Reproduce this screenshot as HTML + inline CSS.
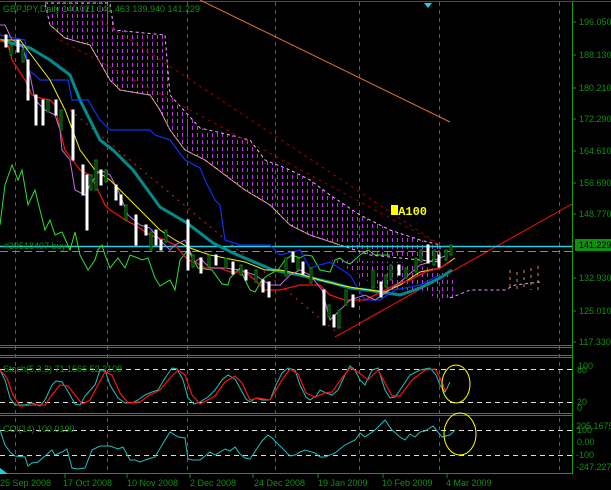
<!DOCTYPE html>
<html><head><meta charset="utf-8"><style>
html,body{margin:0;padding:0;background:#000;}
svg{display:block;font-family:"Liberation Sans",sans-serif;}
</style></head><body>
<svg width="611" height="490" viewBox="0 0 611 490" xmlns="http://www.w3.org/2000/svg">
<defs>
<pattern id="cl" x="0" y="0" width="5" height="7" patternUnits="userSpaceOnUse">
<rect x="2" y="0" width="1" height="4" fill="#c030e8"/>
</pattern>
</defs>
<rect width="611" height="490" fill="#000"/>
<line x1="0" y1="1.5" x2="611" y2="1.5" stroke="#0a7a0a" stroke-width="1"/>
<g stroke="#0f8f0f" stroke-dasharray="4,4" stroke-width="1">
<line x1="15.5" y1="2" x2="15.5" y2="473"/>
<line x1="107.5" y1="2" x2="107.5" y2="473"/>
<line x1="187.5" y1="2" x2="187.5" y2="473"/>
<line x1="275.5" y1="2" x2="275.5" y2="473"/>
<line x1="359.5" y1="2" x2="359.5" y2="473"/>
<line x1="439.5" y1="2" x2="439.5" y2="473"/>
<line x1="559.5" y1="2" x2="559.5" y2="473"/>
</g>
<polygon points="45,3 110,3 114,30 165,35 170,95 200,128 230,135 250,140 265,160 290,170 310,180 330,195 360,215 390,230 420,240 440,245 440,262 400,258 370,255 340,245 310,235 290,225 270,205 245,190 225,175 205,160 185,150 170,130 160,110 150,95 120,90 110,80 90,45 65,38 50,25" fill="url(#cl)" stroke="#f0b0ff" stroke-width="1" stroke-dasharray="3,3"/>
<polyline points="50,25 65,38 90,45 110,80 120,90 150,95 160,110 170,130 185,150 205,160 225,175 245,190 270,205 290,225 310,235 340,245" fill="none" stroke="#f0a050" stroke-dasharray="3,3"/>
<polygon points="330,260 360,275 380,290 420,290 440,300 455,300 455,280 440,270 400,262" fill="url(#cl)"/>
<polyline points="450,298 470,290 505,290 515,285 540,282" fill="none" stroke="#e0a0ff" stroke-dasharray="3,3"/>
<g stroke="#e08a40" stroke-dasharray="3,4">
<line x1="510" y1="270" x2="510" y2="290"/><line x1="517" y1="272" x2="517" y2="290"/><line x1="524" y1="270" x2="524" y2="290"/><line x1="531" y1="268" x2="531" y2="290"/><line x1="538" y1="266" x2="538" y2="290"/>
</g>
<line x1="200" y1="0" x2="450" y2="122" stroke="#e07030" stroke-width="1"/>
<line x1="60" y1="40" x2="440" y2="245" stroke="#a00000" stroke-dasharray="3,4"/>
<line x1="100" y1="20" x2="440" y2="245" stroke="#a00000" stroke-dasharray="3,4"/>
<line x1="70" y1="110" x2="340" y2="335" stroke="#c03020" stroke-dasharray="2,5"/>
<line x1="335" y1="337" x2="572" y2="204" stroke="#ff1010" stroke-width="1"/>
<line x1="0" y1="246.5" x2="572" y2="246.5" stroke="#20d0e0" stroke-width="1.5"/>
<line x1="0" y1="251.5" x2="572" y2="251.5" stroke="#30c030" stroke-dasharray="8,4"/>
<text x="4" y="249" font-size="9" fill="#109010">#39518407 buy</text>
<polyline points="0,225 5,185 12,165 18,180 22,170 28,205 35,190 40,210 45,230 50,220 55,235 62,232 70,250 75,232 80,255 88,270 95,260 98,250 102,245 105,255 110,268 118,258 125,268 130,255 138,258 142,260 148,258 155,278 160,286 170,280 175,290 180,260 188,250 198,268 212,270 222,284 228,285 230,278 240,268 245,280 250,290 255,292 262,280 268,275 278,270 285,260 292,255 300,258 305,255 312,256 320,270 330,272 335,260 340,258 345,262 350,264 360,255 368,250 375,255 380,255 390,255" fill="none" stroke="#30e030" stroke-width="1"/>
<polyline points="0,40 30,48 50,60 70,75 80,100 100,140 113,150 133,170 160,207 187,223 213,243 233,253 273,270 300,275 333,283 350,288 367,290 400,295 420,288 440,278 452,270" fill="none" stroke="#008c8c" stroke-width="3"/>
<polyline points="0,35 25,40 28,70 35,75 40,80 68,80 72,100 88,100 100,120 110,130 150,130 155,135 170,140 185,160 200,168 205,180 215,200 220,205 225,240 240,245 270,245 280,255 300,250 310,268 330,262 350,275 365,300 380,300 395,290 420,285 440,275" fill="none" stroke="#1030f0" stroke-width="1.2"/>
<polyline points="0,40 20,40 35,60 50,80 65,110 80,150 95,170 110,180 120,190 130,200 145,215 160,230 175,240 190,248 210,255 225,258 245,262 265,270 280,270 300,274 320,280 340,285 355,288 370,290 385,292 400,285 420,272 440,268 455,258" fill="none" stroke="#f0f010" stroke-width="1"/>
<polyline points="0,40 8,45 12,60 25,80 32,95 40,98 50,100 55,105 60,130 65,150 80,170 90,175 98,190 105,205 110,210 118,215 125,220 135,225 150,235 165,240 175,245 188,260 195,262 205,268 220,268 230,272 245,272 255,280 265,290 280,290 300,285 310,285 320,285 330,295 345,300 365,300 375,295 395,285 410,280 425,272 440,268 450,262" fill="none" stroke="#f01010" stroke-width="1.3"/>
<polyline points="0,25 5,25 12,40 22,45 28,65 35,100 45,110 55,115 60,130 62,150 70,160 75,190 85,195 90,185 100,170 110,175 118,190 128,215 140,225 150,228 160,240 170,250 175,245 185,240 195,262 200,258 210,268 225,268 240,270 255,275 270,285 280,285 290,275 300,270 310,275 322,290 330,320 340,310 350,300 365,295 375,300 390,290 405,278 420,265 430,262 445,256" fill="none" stroke="#c070e0" stroke-width="1"/>
<g fill="#fff" stroke="#fff" stroke-width="1">
<rect x="5" y="35" width="2" height="12"/><rect x="17" y="40" width="2" height="12"/><rect x="27" y="60" width="2" height="40"/><rect x="35" y="95" width="2" height="30"/><rect x="42" y="100" width="2" height="25"/><rect x="55" y="100" width="2" height="15"/>
<rect x="72" y="110" width="2" height="50"/><rect x="82" y="165" width="2" height="30"/><rect x="86" y="175" width="2" height="55"/><rect x="100" y="170" width="2" height="15"/><rect x="115" y="185" width="2" height="15"/><rect x="120" y="195" width="2" height="10"/><rect x="135" y="215" width="2" height="30"/><rect x="145" y="225" width="2" height="10"/><rect x="155" y="230" width="2" height="15"/><rect x="160" y="240" width="2" height="10"/>
<rect x="187" y="220" width="2" height="50"/><rect x="200" y="258" width="2" height="15"/><rect x="215" y="255" width="2" height="10"/><rect x="232" y="262" width="2" height="12"/><rect x="245" y="270" width="2" height="10"/><rect x="262" y="280" width="2" height="12"/><rect x="268" y="282" width="2" height="15"/>
<rect x="292" y="252" width="2" height="10"/><rect x="302" y="262" width="2" height="12"/><rect x="323" y="290" width="2" height="35"/><rect x="333" y="315" width="2" height="12"/><rect x="352" y="295" width="2" height="12"/><rect x="380" y="282" width="2" height="15"/><rect x="398" y="265" width="2" height="10"/><rect x="427" y="245" width="2" height="18"/><rect x="438" y="255" width="2" height="12"/>
</g>
<g fill="#000" stroke="#109010" stroke-width="1">
<rect x="10" y="45" width="2" height="10"/><rect x="22" y="50" width="2" height="12"/><rect x="47" y="100" width="2" height="12"/><rect x="60" y="110" width="2" height="20"/><rect x="90" y="175" width="2" height="15"/><rect x="95" y="160" width="2" height="30"/><rect x="105" y="170" width="2" height="12"/><rect x="125" y="205" width="2" height="15"/><rect x="150" y="232" width="2" height="18"/><rect x="165" y="230" width="2" height="12"/>
<rect x="192" y="255" width="2" height="12"/><rect x="208" y="255" width="2" height="12"/><rect x="225" y="258" width="2" height="10"/><rect x="240" y="265" width="2" height="10"/><rect x="255" y="270" width="2" height="12"/><rect x="285" y="258" width="2" height="18"/><rect x="297" y="258" width="2" height="12"/><rect x="310" y="268" width="2" height="15"/><rect x="328" y="305" width="2" height="12"/><rect x="338" y="310" width="2" height="18"/><rect x="345" y="290" width="2" height="15"/>
<rect x="372" y="270" width="2" height="18"/><rect x="385" y="275" width="2" height="12"/><rect x="390" y="265" width="2" height="15"/><rect x="405" y="268" width="2" height="10"/><rect x="415" y="258" width="2" height="14"/><rect x="420" y="250" width="2" height="12"/><rect x="433" y="250" width="2" height="15"/><rect x="445" y="250" width="2" height="10"/><rect x="450" y="245" width="2" height="10"/>
</g>
<text x="391" y="215" font-size="12" font-weight="bold" fill="#ffff00" font-family="Liberation Mono,monospace">MA100</text>
<rect x="391" y="205" width="7" height="10" fill="#ffff00"/>
<text x="3" y="12" font-size="9" fill="#109010">GBPJPY,Daily  140.021 141.463 139.940 141.229</text>
<polygon points="424,3 432,3 428,8" fill="#20d0e0"/>
<g stroke="#0fa00f" stroke-width="1">
<line x1="0" y1="345.5" x2="572" y2="345.5"/><line x1="0" y1="347.5" x2="572" y2="347.5"/>
<line x1="0" y1="355.5" x2="572" y2="355.5"/><line x1="0" y1="357.5" x2="572" y2="357.5"/>
<line x1="0" y1="413.5" x2="572" y2="413.5"/><line x1="0" y1="415.5" x2="572" y2="415.5"/>
<line x1="0" y1="473.5" x2="572" y2="473.5"/>
<line x1="572.5" y1="2" x2="572.5" y2="474"/>
</g>
<g stroke="#ddd" stroke-dasharray="5,4"><line x1="0" y1="369.5" x2="572" y2="369.5"/><line x1="0" y1="402.5" x2="572" y2="402.5"/><line x1="0" y1="430.5" x2="572" y2="430.5"/><line x1="0" y1="455.5" x2="572" y2="455.5"/></g>
<text x="3" y="372" font-size="9" fill="#109010">Stoch(5,3,3) 71.1666 52.2109</text>
<polyline points="0,370 5,380 10,398 15,405 25,405 32,403 40,406 45,400 52,385 56,381 62,382 66,388 70,395 75,404 80,405 85,396 95,385 100,370 105,370 110,385 118,398 125,403 132,403 138,400 145,395 152,392 158,390 165,378 172,368 177,369 183,380 188,398 194,404 200,402 208,397 215,390 222,380 228,375 235,379 240,388 246,399 250,402 256,398 262,400 270,400 276,385 282,373 288,368 295,370 300,385 306,397 310,400 316,396 320,390 326,393 332,395 338,390 345,375 350,366 355,370 360,380 365,385 372,370 378,368 385,390 390,398 395,397 400,390 410,375 420,370 430,368 436,375 440,385 445,392 450,382" fill="none" stroke="#20c0c0" stroke-width="1"/>
<polyline points="0,370 7,378 13,395 20,406 35,405 45,405 52,395 60,385 68,386 75,395 82,404 90,400 98,385 105,372 112,375 120,393 128,403 140,402 148,396 160,390 170,378 178,370 185,375 192,395 200,404 215,396 225,382 235,376 242,383 250,400 258,398 270,400 282,380 290,369 298,374 306,393 315,397 325,393 332,392 342,378 350,368 358,372 368,380 378,370 385,383 392,396 400,396 412,380 425,370 435,369 440,378 445,390 448,388" fill="none" stroke="#ff1010" stroke-width="1.2"/>
<ellipse cx="456" cy="384" rx="14" ry="19" fill="none" stroke="#ffff00" stroke-width="1"/>
<text x="3" y="432" font-size="9" fill="#109010">CCI(14) 100.0190</text>
<polyline points="0,430 5,445 10,452 15,456 25,457 28,466 32,463 38,462 45,456 52,450 55,455 62,452 67,449 72,468 78,469 85,468 92,450 100,446 105,446 110,446 118,449 123,447 130,460 135,460 140,462 148,459 155,457 165,440 170,432 178,437 185,438 188,459 192,460 200,460 205,456 210,452 215,455 225,449 230,451 235,447 240,454 245,458 250,459 262,441 268,435 272,438 278,444 290,456 295,455 300,452 305,450 315,453 320,457 325,457 335,453 345,445 355,440 360,433 365,437 375,430 385,420 392,430 400,437 405,440 410,434 415,437 420,432 425,431 433,426 438,432 442,437 450,435 455,430" fill="none" stroke="#20c0c0" stroke-width="1"/>
<ellipse cx="460" cy="434" rx="16" ry="21" fill="none" stroke="#ffff00" stroke-width="1"/>
<polygon points="0,474 0,468 8,474" fill="#20d0e0"/>
<g font-size="9" fill="#109010">
<g stroke="#109010"><line x1="572" y1="22" x2="576" y2="22"/><line x1="572" y1="55" x2="576" y2="55"/><line x1="572" y1="88" x2="576" y2="88"/><line x1="572" y1="119" x2="576" y2="119"/><line x1="572" y1="151" x2="576" y2="151"/><line x1="572" y1="183" x2="576" y2="183"/><line x1="572" y1="214" x2="576" y2="214"/><line x1="572" y1="278" x2="576" y2="278"/><line x1="572" y1="311" x2="576" y2="311"/><line x1="572" y1="342" x2="576" y2="342"/></g>
<text x="579" y="25">196.050</text>
<text x="579" y="58">188.130</text>
<text x="579" y="91">180.210</text>
<text x="579" y="122">172.290</text>
<text x="579" y="154">164.610</text>
<text x="579" y="186">156.690</text>
<text x="579" y="217">148.770</text>
<rect x="575" y="239" width="36" height="12" fill="#109010"/>
<text x="579" y="248" fill="#000">141.229</text>
<text x="579" y="281">132.930</text>
<text x="579" y="314">125.010</text>
<text x="579" y="345">117.330</text>
<text x="578" y="369">100</text>
<text x="577" y="373">80</text>
<text x="577" y="405">20</text>
<text x="577" y="411">0</text>
<text x="576" y="429">205.1675</text>
<text x="577" y="433">100</text>
<text x="577" y="445">0.00</text>
<text x="576" y="458">-100</text>
<text x="576" y="470">-247.2277</text>
</g>
<g stroke="#109010"><line x1="65" y1="474" x2="65" y2="478"/><line x1="127" y1="474" x2="127" y2="478"/><line x1="190" y1="474" x2="190" y2="478"/><line x1="253" y1="474" x2="253" y2="478"/><line x1="318" y1="474" x2="318" y2="478"/><line x1="383" y1="474" x2="383" y2="478"/><line x1="447" y1="474" x2="447" y2="478"/></g>
<g font-size="9" fill="#109010">
<text x="0" y="486">25 Sep 2008</text>
<text x="63" y="486">17 Oct 2008</text>
<text x="127" y="486">10 Nov 2008</text>
<text x="190" y="486">2 Dec 2008</text>
<text x="254" y="486">24 Dec 2008</text>
<text x="318" y="486">19 Jan 2009</text>
<text x="382" y="486">10 Feb 2009</text>
<text x="446" y="486">4 Mar 2009</text>
</g>
</svg>
</body></html>
